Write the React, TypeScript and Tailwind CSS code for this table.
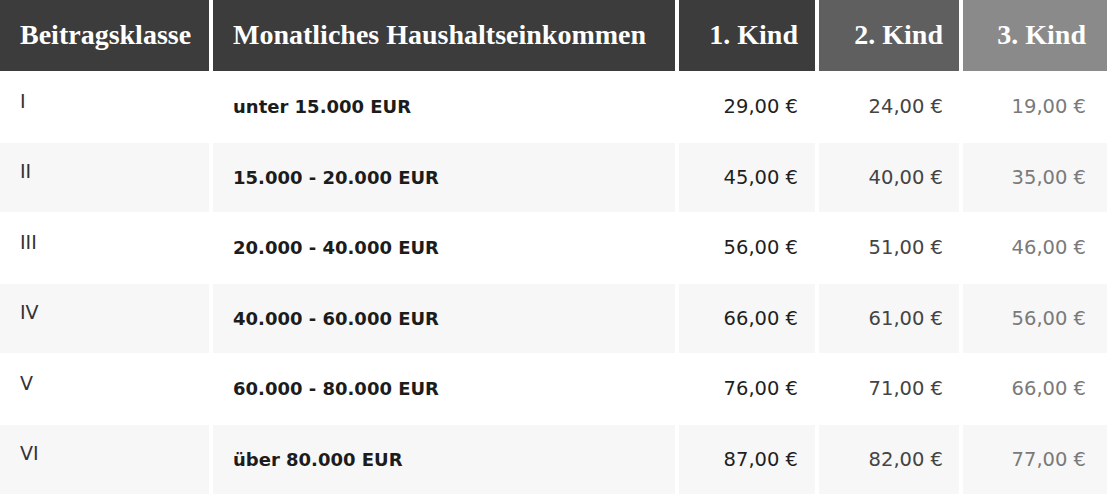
import React from "react";

const rows = [
  { klasse: "I", range: "unter 15.000 EUR", k1: "29,00 €", k2: "24,00 €", k3: "19,00 €" },
  { klasse: "II", range: "15.000 - 20.000 EUR", k1: "45,00 €", k2: "40,00 €", k3: "35,00 €" },
  { klasse: "III", range: "20.000 - 40.000 EUR", k1: "56,00 €", k2: "51,00 €", k3: "46,00 €" },
  { klasse: "IV", range: "40.000 - 60.000 EUR", k1: "66,00 €", k2: "61,00 €", k3: "56,00 €" },
  { klasse: "V", range: "60.000 - 80.000 EUR", k1: "76,00 €", k2: "71,00 €", k3: "66,00 €" },
  { klasse: "VI", range: "über 80.000 EUR", k1: "87,00 €", k2: "82,00 €", k3: "77,00 €" },
];

const head = "h-[70.5px] flex items-center text-white font-bold text-[28px] font-['Liberation_Serif',serif]";
const body = "h-[68.5px] flex items-center font-['DejaVu_Sans',sans-serif]";

export default function App() {
  return (
    <div className="w-[1107px] h-[495px] bg-white overflow-hidden">
      <div className="grid grid-cols-[209px_462px_136px_140px_144px] gap-x-[4px] gap-y-[2px]">
        {/* KOPFZEILE */}
        <div className={`${head} bg-[#3c3c3c] pl-5`}>Beitragsklasse</div>
        <div className={`${head} bg-[#3c3c3c] pl-5`}>Monatliches Haushaltseinkommen</div>
        <div className={`${head} bg-[#3c3c3c] justify-end pr-[17px]`}>1. Kind</div>
        <div className={`${head} bg-[#5f5f5f] justify-end pr-[16px]`}>2. Kind</div>
        <div className={`${head} bg-[#8a8a8a] justify-end pr-[21px]`}>3. Kind</div>

        {rows.map((r, i) => {
          const bg = i % 2 === 1 ? "bg-[#f7f7f7]" : "bg-white";
          return (
            <React.Fragment key={r.klasse}>
              <div className={`${body} ${bg} items-start pt-[14px] pl-5 text-[19px] text-[#333]`}>{r.klasse}</div>
              <div className={`${body} ${bg} pl-5 text-[18px] font-bold text-[#1c1c1c]`}>{r.range}</div>
              <div className={`${body} ${bg} justify-end pr-[17px] text-[19.5px] text-[#1f1f1f]`}>{r.k1}</div>
              <div className={`${body} ${bg} justify-end pr-[16px] text-[19.5px] text-[#444]`}>{r.k2}</div>
              <div className={`${body} ${bg} justify-end pr-[21px] text-[19.5px] text-[#7a7a7a]`}>{r.k3}</div>
            </React.Fragment>
          );
        })}
      </div>
    </div>
  );
}
